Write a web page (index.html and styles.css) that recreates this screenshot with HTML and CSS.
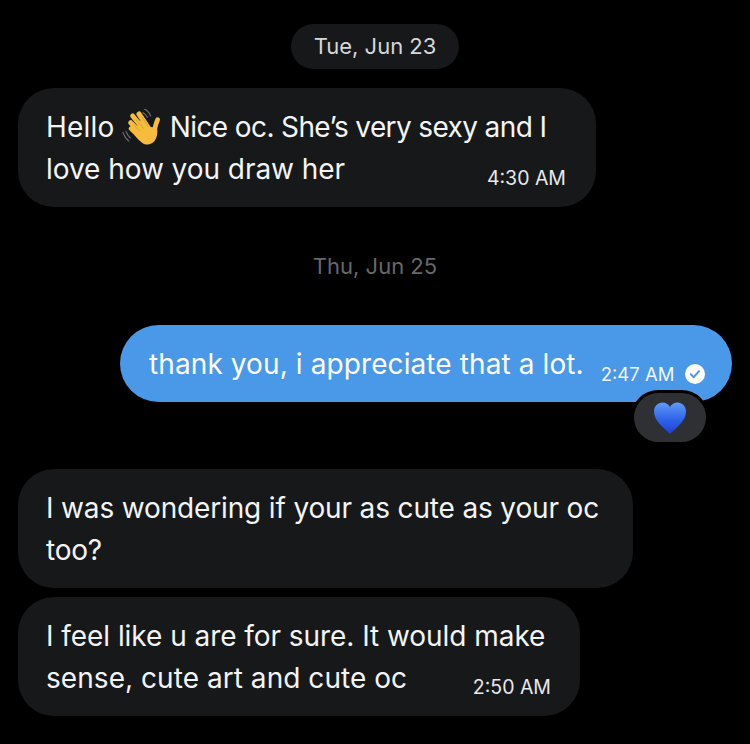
FILE: index.html
```html
<!DOCTYPE html>
<html lang="en">
<head>
<meta charset="utf-8">
<title>Messages</title>
<link rel="stylesheet" href="styles.css">
</head>
<body>
<main class="chat">
  <div class="date-row first"><span class="date pill">Tue, Jun 23</span></div>
  <div class="bubble in b1">
    <div class="line"><span class="hello">Hello</span> <svg class="wave" viewBox="40 45 120 120" aria-hidden="true">
      <g fill="none" stroke="#6e7073" stroke-width="3.500" stroke-linecap="round"><path d="M43 122c3 9 8 18 17 25"/><path d="M52 118c3 8 6 14 13 20"/><path d="M108 52c7 3 14 10 18 20"/><path d="M103 62c6 3 10 7 13 14"/></g>
      <g fill="none" stroke="#f6bd3c" stroke-linecap="round"><path stroke-width="15" d="M72 72l38 46"/><path stroke-width="15" d="M91 66l32 48"/><path stroke-width="15" d="M66 92l36 36"/><path stroke-width="14" d="M67 110l30 28"/><path stroke-width="14" d="M147 83c-5 10-7 20-10 32"/></g>
      <path fill="#f6bd3c" d="M93 85l32 20 20 2c3 14 0 30-8 41-8 10-24 13-36 5-8-6-16-14-24-24z"/>
      <path fill="none" stroke="#d1932a" stroke-width="2" stroke-linecap="round" d="M82 83l22 26M99 74l20 30M76 100l18 18"/>
    </svg> <span class="tight">Nice oc. She’s very sexy and I</span></div>
    <div class="line row"><span class="loose">love how you draw her</span><time class="time">4:30 AM</time></div>
  </div>
  <div class="date-row second"><span class="date">Thu, Jun 25</span></div>
  <div class="sent-wrap">
    <div class="bubble out">
      <span class="sent-text">thank you, i appreciate that a lot.</span>
      <time class="time">2:47 AM</time>
      <svg class="check" viewBox="0 0 20 20" aria-hidden="true"><circle cx="10" cy="10" r="10" fill="#fff"/><path d="M5.800 10.300l2.900 2.900 5.400-6" fill="none" stroke="#4a98e8" stroke-width="2" stroke-linecap="round" stroke-linejoin="round"/></svg>
    </div>
    <div class="reaction"><svg viewBox="0 0 34 32" aria-hidden="true"><defs><linearGradient id="h" x1="0" y1="0" x2="0" y2="1"><stop offset="0" stop-color="#5f9bf5"/><stop offset=".55" stop-color="#2f63ea"/><stop offset="1" stop-color="#1f3fd0"/></linearGradient></defs><path fill="url(#h)" d="M17 32C11 26 1 19 1 9.500 1 4 5 .5 9.500.5c3.300 0 6 1.700 7.500 4.500C18.500 2.200 21.200.5 24.500.5 29 .5 33 4 33 9.500 33 19 23 26 17 32z"/></svg></div>
  </div>
  <div class="bubble in b3">
    <div class="line exact">I was wondering if your as cute as your oc</div>
    <div class="line">too?</div>
  </div>
  <div class="bubble in b4">
    <div class="line loose">I feel like u are for sure. It would make</div>
    <div class="line row"><span class="wide">sense, cute art and cute oc</span><time class="time">2:50 AM</time></div>
  </div>
</main>
</body>
</html>
```
FILE: styles.css
```css
* { box-sizing: border-box; }
html, body { margin: 0; height: 100%; background: #000; overflow: hidden; }
body { font-family: Inter, "Liberation Sans", sans-serif; color: #f3f4f5; }
.chat { display: flex; flex-direction: column; align-items: flex-start; padding: 24px 18px 0; }
.date-row { align-self: stretch; display: flex; justify-content: center; font-size: 22px; line-height: 45px; }
.date-row.first { margin-bottom: 19px; }
.date-row.second { margin: 37px 0 36px; height: 45px; }
.date { padding: 0 23px; border-radius: 23px; color: #d6d7d9; }
.date.pill { background: #17181a; }
.second .date { color: #66686b; }
.bubble { background: #17181a; border-radius: 36px; font-size: 28px; line-height: 42px; letter-spacing: -.2px; }
.bubble.in { padding: 18px 28px 17px; }
.b1 { width: 578px; }
.b3 { width: 615px; margin-top: 67px; margin-bottom: 9px; }
.b4 { width: 562px; }
.line { white-space: nowrap; height: 42px; }
.line.row { display: flex; justify-content: space-between; align-items: center; }
.hello { letter-spacing: .2px; }
.tight { letter-spacing: -.62px; }
.loose { letter-spacing: -.05px; }
.wide { letter-spacing: .05px; }
.exact { letter-spacing: -.15px; }
.wave { width: 40px; height: 40px; vertical-align: -10px; }
.time { font-size: 19.5px; line-height: 24px; letter-spacing: 0; color: #e8e9ea; position: relative; top: 9px; margin-right: 2px; }
.b4 .time { margin-right: 1px; }
.sent-wrap { align-self: flex-end; position: relative; }
.bubble.out { width: 612px; height: 77px; background: #4a98e8; border-radius: 39px; padding: 0 24px 0 29px; display: flex; align-items: center; color: #fff; white-space: nowrap; }
.sent-text { letter-spacing: .1px; }
.out .time { font-size: 18.5px; color: #f0f6fd; margin: 0 0 0 17px; top: 10px; }
.check { width: 20px; height: 20px; margin-left: 11px; position: relative; top: 10px; flex: none; }
.reaction { position: absolute; right: 26px; top: 68px; width: 72px; height: 49px; background: #2e3033; border-radius: 25px; box-shadow: 0 0 0 3px #000; display: flex; align-items: center; justify-content: center; }
.reaction svg { width: 34px; height: 32px; }
```
